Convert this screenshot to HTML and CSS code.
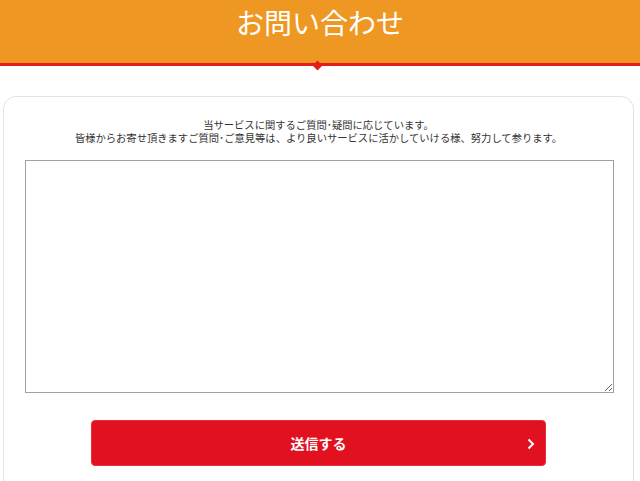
FILE: index.html
```html
<!DOCTYPE html>
<html lang="ja">
<head>
<meta charset="utf-8">
<title>お問い合わせ</title>
<link rel="stylesheet" href="styles.css">
</head>
<body>
<header class="hdr">
  <h1 class="hdr-title">お問い合わせ</h1>
  <span class="hdr-mark"></span>
</header>
<main class="page">
  <section class="card">
    <p class="lead">当サービスに関するご質問･疑問に応じています。<br>皆様からお寄せ頂きますご質問･ご意見等は、より良いサービスに活かしていける様、努力して参ります。</p>
    <form class="form">
      <textarea class="msg"></textarea>
      <button type="button" class="send">
        <span class="send-label">送信する</span>
        <svg class="send-arrow" width="8" height="12" viewBox="0 0 8 12"><path d="M1.5 1.5 L6 6 L1.5 10.5" fill="none" stroke="#fff" stroke-width="2"/></svg>
      </button>
    </form>
  </section>
</main>
</body>
</html>
```
FILE: styles.css
```css
html, body {
  margin: 0;
  padding: 0;
  background: #fff;
  font-family: "Noto Sans CJK JP", "Noto Sans", sans-serif;
}
.hdr {
  position: relative;
  height: 63px;
  background: #ee9722;
  border-bottom: 3px solid #e41d1d;
  display: flex;
  justify-content: center;
}
.hdr-title {
  margin: 0;
  width: 636px;
  text-align: center;
  color: #fff;
  font-size: 28px;
  font-weight: 400;
  line-height: 44px;
}
.hdr-mark {
  position: absolute;
  left: 314px;
  bottom: -6px;
  width: 7px;
  height: 7px;
  background: #e41d1d;
  transform: rotate(45deg);
}
.page {
  width: 636px;
  padding-top: 30px;
}
.card {
  margin-left: 3px;
  width: 629px;
  border: 1px solid #e2e2e2;
  border-radius: 13px;
  padding: 21px 0 40px;
  box-sizing: content-box;
}
.lead {
  margin: 0;
  text-align: center;
  font-size: 10.3px;
  line-height: 13px;
  color: #333;
}
.form {
  display: flex;
  flex-direction: column;
  align-items: center;
  margin-top: 16px;
}
.msg {
  display: block;
  width: 589px;
  height: 233px;
  margin-left: 2px;
  box-sizing: border-box;
  border: 1px solid #a0a0a0;
  border-radius: 0;
  resize: vertical;
  font-family: inherit;
}
.send {
  position: relative;
  margin-top: 27px;
  width: 455px;
  height: 46px;
  box-sizing: border-box;
  background: #e1111f;
  border: 1px solid #e8303a;
  border-radius: 4px;
  color: #fff;
  font-family: inherit;
  font-size: 14px;
  font-weight: 700;
  display: flex;
  align-items: center;
  justify-content: center;
  padding: 0;
}
.send-arrow {
  position: absolute;
  right: 10px;
  top: 17px;
}
```
